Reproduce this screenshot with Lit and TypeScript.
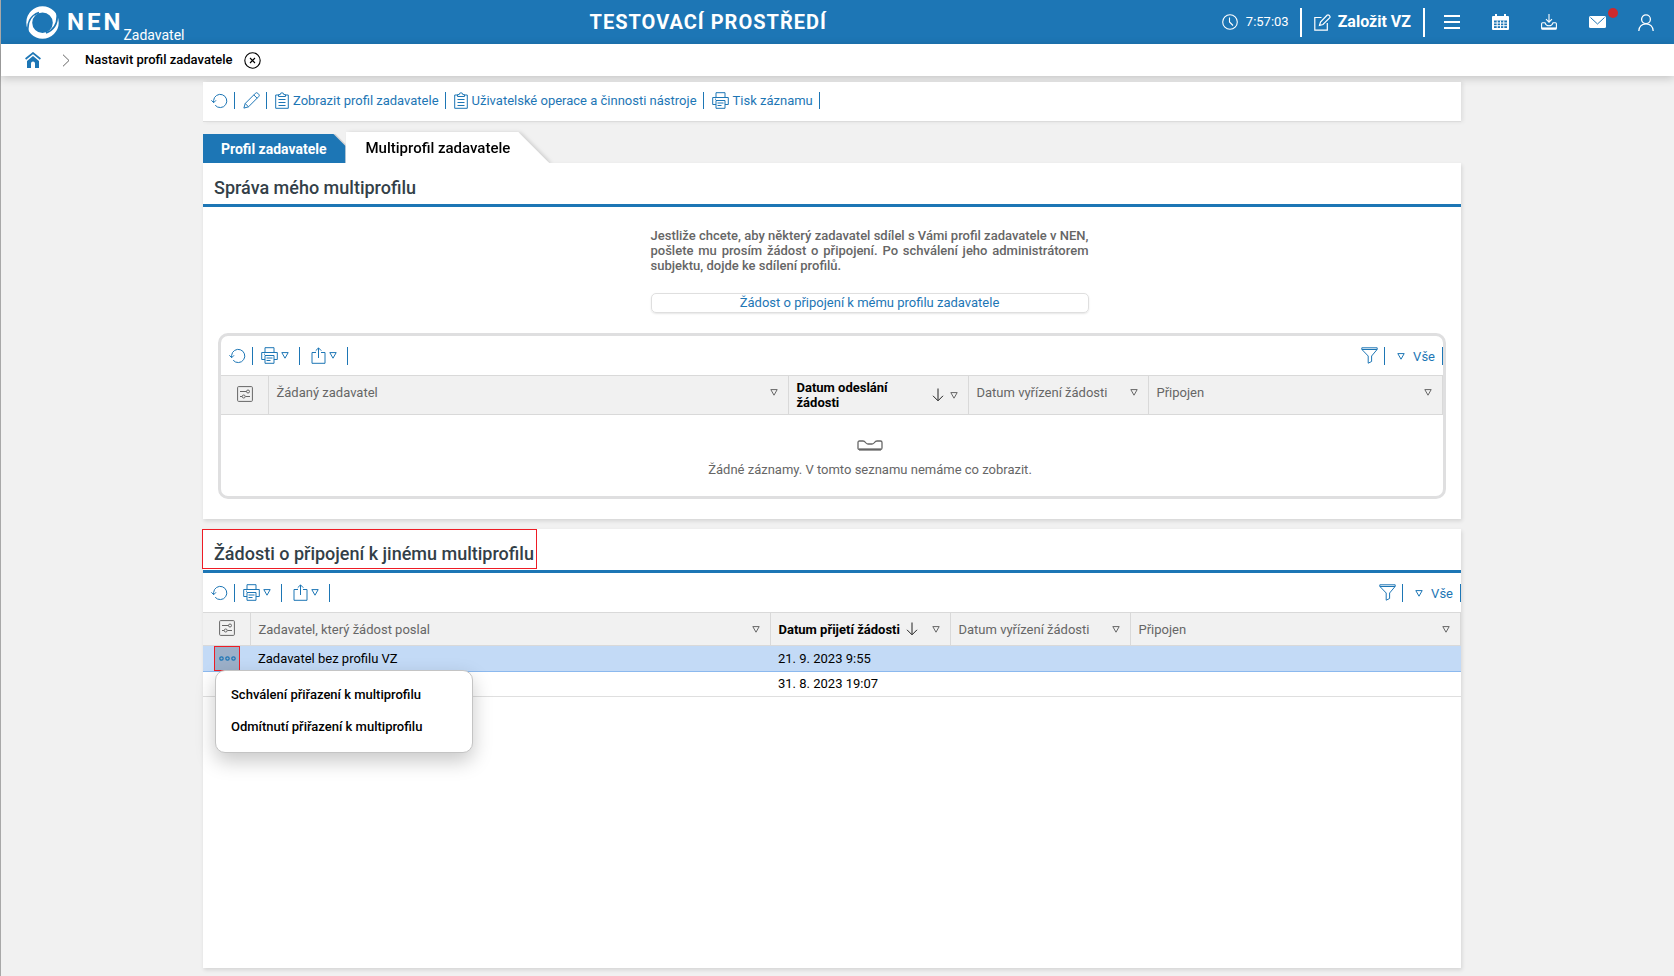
import { LitElement, html, css } from "lit";
import { customElement } from "lit/decorators.js";

const refresh = html`<svg width="17" height="16" viewBox="0 0 17 16" fill="none" stroke="currentColor"><path d="M2.6 9.6V7.5a6.6 6.6 0 1 1 1.6 4.8"/><path d="M.4 7.3l2.3 2.4 2.3-2.4"/></svg>`;
const pencil = html`<svg width="17" height="17" viewBox="0 0 17 17" fill="none" stroke="currentColor"><path d="M.9 16.1l1.3-4.6L12.4 1.3a1.7 1.7 0 0 1 2.4 0l.9.9a1.7 1.7 0 0 1 0 2.4L5.500 14.800z"/><path d="M10.800 2.900l3.300 3.300M2.200 11.500l3.300 3.300"/></svg>`;
const clipboard = html`<svg width="14" height="17" viewBox="0 0 14 17" fill="none" stroke="currentColor"><path d="M3.500 3H.7v13.300h12.600V3h-2.800M3.500 4.500V2.600h1.700a1.800 1.800 0 0 1 3.600 0h1.700v1.900z"/><path d="M3.500 7.500h7M3.500 10.500h7M3.500 13.500h7"/></svg>`;
const printer = html`<svg width="17" height="17" viewBox="0 0 17 17" fill="none" stroke="currentColor"><path d="M4 5V.7h9V5M4 12.500H.7V5.500h15.600v7H13"/><path d="M4 8.500h9v7.800H4zM5.500 11h6M5.500 13.500h4M3 7.200h1"/></svg>`;
const exportIcon = html`<svg width="15" height="17" viewBox="0 0 15 17" fill="none" stroke="currentColor"><path d="M5 5.500H1v10.800h13V5.500h-4M7.500 11V1M4.700 3.700l2.800-2.800 2.800 2.800"/></svg>`;
const triangle = html`<svg width="8" height="7" viewBox="0 0 8 7" fill="none" stroke="currentColor"><path d="M.8.6h6.400L4 6.200z"/></svg>`;
const funnel = html`<svg width="17" height="17" viewBox="0 0 17 17" fill="none" stroke="currentColor"><path d="M.8.8h15.400v1.600L10.600 9v5.500l-3.400 1.700V9L.8 2.400zM1 2.500h15"/></svg>`;
const settings = html`<svg width="16" height="16" viewBox="0 0 16 16" fill="none" stroke="currentColor"><rect x=".6" y=".6" width="14.800" height="14.800" rx="1"/><path d="M3 5.500h6.500M13 10.500H8.500M3 10.500h2"/><circle cx="11" cy="5.500" r="1.500"/><circle cx="6.700" cy="10.500" r="1.500"/></svg>`;
const sortDown = html`<svg width="12" height="14" viewBox="0 0 12 14" fill="none" stroke="#222"><path d="M6 .5v12M1 7.800l5 5 5-5"/></svg>`;
const tray = html`<svg width="26" height="11" viewBox="0 0 26 11" fill="none" stroke="currentColor" stroke-width="1.300"><path d="M1 8V2.500Q1 1 2.500 1H6q1.500 0 2.500 1.500T11 4h4q1.500 0 2.500-1.500T20 1h3.500Q25 1 25 2.500V8q0 1.500-1.500 1.500h-21Q1 9.500 1 8z"/><path d="M2 9.500h22" stroke-width="2"/></svg>`;
const dots = html`<svg width="17" height="5" viewBox="0 0 17 5" fill="none" stroke="currentColor" stroke-width="1.200"><circle cx="2.500" cy="2.500" r="1.700"/><circle cx="8.500" cy="2.500" r="1.700"/><circle cx="14.500" cy="2.500" r="1.700"/></svg>`;
const logo = html`<svg width="33" height="33" viewBox="0 0 33 33"><path fill="#fff" fill-rule="evenodd" d="M16.500.3a16.200 16.200 0 1 1 0 32.400 16.200 16.200 0 1 1 0-32.400zM16.500 6.500a10.300 10.300 0 1 0 0 20.600 10.300 10.300 0 1 0 0-20.600z"/><path fill="none" stroke="#1d76b5" stroke-width="1.700" d="M2 26C1 17.500 4 9.500 13 6.500M31 7c1 8.500-2 16.500-11 20"/></svg>`;
const home = html`<svg width="16" height="16" viewBox="0 0 16 16"><path fill="none" stroke="currentColor" stroke-width="1.700" d="M.6 7L8 1l7.400 6"/><path fill="currentColor" d="M8 4l6 5v7h-4v-4.500a2 2 0 0 0-4 0V16H2V9z"/></svg>`;
const chevron = html`<svg width="8" height="13" viewBox="0 0 8 13" fill="none" stroke="currentColor"><path d="M1 .7l6 5.800-6 5.800"/></svg>`;
const closeCircle = html`<svg width="17" height="17" viewBox="0 0 17 17" fill="none" stroke="currentColor" stroke-width="1.100"><circle cx="8.500" cy="8.500" r="7.700"/><path d="M6 6l5 5M11 6l-5 5"/></svg>`;
const clock = html`<svg width="16" height="16" viewBox="0 0 16 16" fill="none" stroke="currentColor" stroke-width="1.100"><circle cx="8" cy="8" r="7.300"/><path d="M7.500 3.500V8l3.500 3.500"/></svg>`;
const compose = html`<svg width="17" height="17" viewBox="0 0 17 17" fill="none" stroke="currentColor" stroke-width="1.200"><path d="M7.500 3.500H.8v12.700h12.500V9"/><path d="M5.500 11.500l1-3.500L13 1.300q1-.9 2 0l.6.600q.9 1 0 2L9 10.500z"/></svg>`;
const burger = html`<svg width="16" height="14" viewBox="0 0 16 14" fill="none" stroke="currentColor" stroke-width="2"><path d="M0 1h16M0 7h16M0 13h16"/></svg>`;
const calendar = html`<svg width="17" height="16" viewBox="0 0 17 16"><path fill="currentColor" fill-rule="evenodd" d="M1 2h2V0h2v2h7V0h2v2h2q1 0 1 1v12q0 1-1 1H1q-1 0-1-1V3q0-1 1-1zm1 4.500V14h13V6.500z"/><path stroke="currentColor" d="M2 9h13M2 11.700h13M5.200 6.500V14M8.500 6.500V14M11.800 6.500V14"/></svg>`;
const download = html`<svg width="16" height="16" viewBox="0 0 16 16" fill="none" stroke="currentColor" stroke-width="1.100"><path d="M8 0v8M5 5.200L8 8.200l3-3"/><path d="M4 8.800H1.500q-.9 0-.9 1v4.500q0 1 .9 1h13q.9 0 .9-1V9.800q0-1-.9-1H12q-1 3-4 3t-4-3z"/><path d="M1 14.300h14" stroke-width="1.800"/></svg>`;
const mail = html`<svg width="17" height="12" viewBox="0 0 17 12"><rect width="17" height="12" rx="1.500" fill="currentColor"/><path fill="none" stroke="#1d76b5" d="M1.500 1.500l7 6.500 7-6.500"/></svg>`;
const user = html`<svg width="16" height="17" viewBox="0 0 16 17" fill="none" stroke="currentColor" stroke-width="1.300"><circle cx="8" cy="5.200" r="4.400"/><path d="M.8 17C1 12.500 4 9.800 8 9.800s7 2.700 7.200 7.200"/></svg>`;

const base = css`
  * { box-sizing: border-box; }
  button { font: inherit; color: inherit; background: none; border: 0; padding: 0; cursor: pointer; }
  a { color: inherit; text-decoration: none; }
  svg { display: block; flex: none; }
`;

interface Column { label: string; sorted?: boolean; }

@customElement("request-grid")
export class RequestGrid extends LitElement {
  static properties = {
    columns: { attribute: false },
    rows: { attribute: false },
    menuRow: { type: Number },
  };
  declare columns: Column[];
  declare rows: string[][];
  declare menuRow: number;

  constructor() {
    super();
    this.columns = [];
    this.rows = [];
    this.menuRow = -1;
  }

  static styles = [base, css`
    :host { display: block; color: #666; }
    .bar { display: flex; align-items: center; height: 39px; padding-left: 8px; color: #1d76b5; }
    .tool { display: flex; align-items: center; gap: 3px; height: 18px; border-right: 1px solid; }
    .tool.plain { padding-right: 6px; }
    .tool.drop { padding: 0 10px 0 8px; }
    .tool.export { padding-left: 11px; }
    .right { margin-left: auto; display: flex; }
    .tool.view { gap: 8px; padding: 2px 7px 0 12px; }
    table { width: 100%; border-collapse: collapse; table-layout: fixed; }
    .c-tools { width: 47px; }
    .c-name { width: 520px; }
    .c-date { width: 180px; }
    th { background: #f1f1f1; border: 1px solid #d9d9d9; border-left: 0; padding: 0 8px; font-weight: 400; text-align: left; height: 33px; line-height: 15px; }
    th.tools { padding: 0 0 0 16px; }
    .th { display: flex; align-items: center; gap: 6px; padding-right: 2px; }
    .menu-toggle { margin-left: auto; color: #666; }
    .sorted { color: #000; font-weight: 700; }
    .tall th { height: 39px; }
    .tall .th { padding-bottom: 6px; }
    .tall .sorted .th { padding-bottom: 0; }
    td { height: 25px; padding: 0 8px; border-bottom: 1px solid #dfdfdf; color: #000; line-height: 16px; }
    td.tools { padding: 0 0 0 11px; position: relative; }
    .selected td { background: #c3daf6; border-bottom-color: #8cb9ee; }
    .more { display: grid; place-items: center; width: 26px; height: 25px; border: 1px solid #ee1c25; background: #9cb0c9; color: #1d76b5; }
    .menu { position: absolute; z-index: 2; left: 12px; top: 24px; width: 258px; padding: 8px 0 9px; background: #fff; border: 1px solid #c4c4c4; border-radius: 10px; box-shadow: 0 8px 20px rgba(0, 0, 0, .22); }
    .item { display: block; width: 100%; height: 32px; padding: 0 15px; text-align: left; font-weight: 500; }
    .empty { display: flex; flex-direction: column; align-items: center; gap: 10px; padding: 25px 0 17px 76px; line-height: 18px; }
  `];

  render() {
    const empty = !this.rows.length;
    return html`
      <div class="bar">
        <button class="tool plain" aria-label="Obnovit">${refresh}</button>
        <button class="tool drop" aria-label="Tisk">${printer}${triangle}</button>
        <button class="tool drop export" aria-label="Export">${exportIcon}${triangle}</button>
        <div class="right">
          <button class="tool plain" aria-label="Filtr">${funnel}</button>
          <button class="tool view">${triangle}Vše</button>
        </div>
      </div>
      <table class=${empty ? "tall" : ""}>
        <colgroup><col class="c-tools"><col class="c-name"><col class="c-date"><col class="c-date"><col></colgroup>
        <thead><tr>
          <th class="tools"><button aria-label="Nastavení sloupců">${settings}</button></th>
          ${this.columns.map((c) => html`<th class=${c.sorted ? "sorted" : ""}><div class="th"><span>${c.label}</span>${c.sorted ? sortDown : ""}<button class="menu-toggle" aria-label="Možnosti sloupce">${triangle}</button></div></th>`)}
        </tr></thead>
        <tbody>${this.rows.map((row, i) => html`
          <tr class=${i === this.menuRow ? "selected" : ""}>
            <td class="tools">${i === this.menuRow ? html`
              <button class="more" aria-label="Akce">${dots}</button>
              <div class="menu" role="menu">
                <button class="item" role="menuitem">Schválení přiřazení k multiprofilu</button>
                <button class="item" role="menuitem">Odmítnutí přiřazení k multiprofilu</button>
              </div>` : ""}</td>
            ${row.map((cell) => html`<td>${cell}</td>`)}
          </tr>`)}
        </tbody>
      </table>
      ${empty ? html`<div class="empty">${tray}<span>Žádné záznamy. V tomto seznamu nemáme co zobrazit.</span></div>` : ""}
    `;
  }
}

@customElement("app-root")
export class AppRoot extends LitElement {
  static styles = [base, css`
    :host { display: flex; flex-direction: column; min-height: 100vh; background: #f1f1f1; border-left: 1px solid #a8a8a8; font: 13px/16px Roboto, sans-serif; color: #000; box-sizing: border-box; }
    .header { display: flex; justify-content: space-between; align-items: center; height: 44px; padding: 0 20px 0 25px; background: #1d76b5; color: #fff; }
    .brand { display: flex; align-items: center; height: 44px; }
    .name { margin-left: 8px; font-size: 24px; font-weight: 700; letter-spacing: 3px; line-height: 44px; }
    .role { align-self: flex-end; font-size: 14px; line-height: 18px; }
    .env { padding-left: 10px; font-size: 20px; font-weight: 700; letter-spacing: 1px; line-height: 44px; }
    .actions { display: flex; align-items: center; justify-content: flex-end; }
    .clock { display: flex; align-items: center; gap: 8px; padding-right: 11px; }
    .create { display: flex; align-items: center; gap: 7px; height: 29px; padding: 0 12px; border: 2px solid #fff; border-width: 0 2px; font-size: 16px; font-weight: 700; }
    .quick { display: flex; align-items: center; gap: 32px; padding-left: 19px; }
    .mail { position: relative; }
    .badge { position: absolute; left: 19px; top: -8px; width: 10px; height: 10px; border-radius: 50%; background: #cc2a2e; }
    .crumbs { display: flex; align-items: center; height: 32px; padding-left: 24px; background: #fff; box-shadow: 0 2px 10px rgba(0, 0, 0, .2); font-weight: 500; }
    .home { color: #1d76b5; }
    .chevron { margin: 0 15px 0 21px; color: #666; }
    .close { margin-left: 12px; }
    .content { display: flex; flex-direction: column; flex: 1; width: 100%; padding: 6px 11px 8px 0; }
    .column { display: flex; flex-direction: column; flex: 1; width: 100%; max-width: 1258px; margin: 0 auto; }
    .toolbar { display: flex; align-items: center; height: 40px; padding: 0 0 2px 8px; background: #fff; border-bottom: 1px solid #dcdcdc; box-shadow: 2px 0 4px rgba(0, 0, 0, .08); color: #1d76b5; }
    .tool { display: flex; align-items: center; gap: 4px; height: 17px; padding: 0 6px 0 8px; border-right: 1px solid; }
    .tool.reload { padding-left: 0; }
    .tabs { display: flex; align-items: flex-end; height: 31px; margin-top: 10px; }
    .tab { height: 29px; padding: 1px 19px 0 18px; background: #1d76b5; color: #fff; font-size: 14px; font-weight: 700; clip-path: polygon(0 0, calc(100% - 12px) 0, 100% 12px, 100% 100%, 0 100%); }
    .passive-wrap { background: linear-gradient(#d4d4d4, #d4d4d4) no-repeat right bottom / 12px 29px; clip-path: polygon(0 0, calc(100% - 10px) 0, 100% 10px, 100% 100%, 0 100%); }
    .active-wrap { filter: drop-shadow(2px 1px 2px rgba(0, 0, 0, .2)); clip-path: inset(-4px -10px 0 0); }
    .tab.active { height: 31px; padding: 0 39px 0 20px; background: #fff; color: #000; font-size: 15px; font-weight: 500; clip-path: polygon(0 0, calc(100% - 31px) 0, 100% 100%, 0 100%); }
    .card { background: #fff; box-shadow: 1px 2px 4px rgba(0, 0, 0, .12); }
    .card.first { padding-bottom: 20px; }
    .card.second { flex: 1; margin-top: 10px; }
    .heading { display: flex; height: 44px; border-bottom: 3px solid #1d76b5; }
    .title { margin: 0; padding: 4px 0 0 11px; font-size: 18px; font-weight: 500; line-height: 41px; color: #333f48; }
    .title.marked { height: 40px; margin-left: -1px; padding-top: 3px; padding-right: 2px; border: 1px solid #ee1c25; }
    .intro-row { padding-left: 75px; }
    .intro { display: flex; flex-direction: column; gap: 20px; width: 438px; margin: 21px auto 20px; }
    .text { margin: 0; font-weight: 500; line-height: 15px; color: #666; text-align: justify; }
    .request { height: 20px; border: 1px solid #dfdfdf; border-radius: 5px; box-shadow: 0 1px 2px rgba(0, 0, 0, .1); color: #1d76b5; line-height: 18px; }
    .frame { margin: 0 15px; border: 3px solid #dfdfe0; border-radius: 10px; overflow: hidden; }
  `];

  render() {
    return html`
      <header class="header">
        <div class="brand">${logo}<span class="name">NEN</span><span class="role">Zadavatel</span></div>
        <div class="env">TESTOVACÍ PROSTŘEDÍ</div>
        <div class="actions">
          <span class="clock">${clock}7:57:03</span>
          <button class="create">${compose}Založit VZ</button>
          <div class="quick">
            <button aria-label="Menu">${burger}</button>
            <button aria-label="Kalendář">${calendar}</button>
            <button aria-label="Stahování">${download}</button>
            <button class="mail" aria-label="Zprávy">${mail}<span class="badge"></span></button>
            <button aria-label="Uživatel">${user}</button>
          </div>
        </div>
      </header>
      <nav class="crumbs">
        <a class="home" href="#" aria-label="Domů">${home}</a>
        <span class="chevron">${chevron}</span>
        <span>Nastavit profil zadavatele</span>
        <button class="close" aria-label="Zavřít">${closeCircle}</button>
      </nav>
      <main class="content"><div class="column">
        <div class="toolbar">
          <button class="tool reload" aria-label="Obnovit">${refresh}</button>
          <button class="tool" aria-label="Upravit">${pencil}</button>
          <button class="tool">${clipboard}Zobrazit profil zadavatele</button>
          <button class="tool">${clipboard}Uživatelské operace a činnosti nástroje</button>
          <button class="tool">${printer}Tisk záznamu</button>
        </div>
        <div class="tabs" role="tablist">
          <div class="passive-wrap"><button class="tab" role="tab">Profil zadavatele</button></div>
          <div class="active-wrap"><button class="tab active" role="tab" aria-selected="true">Multiprofil zadavatele</button></div>
        </div>
        <section class="card first">
          <div class="heading"><h2 class="title">Správa mého multiprofilu</h2></div>
          <div class="intro-row"><div class="intro">
            <p class="text">Jestliže chcete, aby některý zadavatel sdílel s Vámi profil zadavatele v NEN, pošlete mu prosím žádost o připojení. Po schválení jeho administrátorem subjektu, dojde ke sdílení profilů.</p>
            <button class="request">Žádost o připojení k mému profilu zadavatele</button>
          </div></div>
          <div class="frame">
            <request-grid .columns=${[{ label: "Žádaný zadavatel" }, { label: "Datum odeslání žádosti", sorted: true }, { label: "Datum vyřízení žádosti" }, { label: "Připojen" }]}></request-grid>
          </div>
        </section>
        <section class="card second">
          <div class="heading"><h2 class="title marked">Žádosti o připojení k jinému multiprofilu</h2></div>
          <request-grid menuRow="0"
            .columns=${[{ label: "Zadavatel, který žádost poslal" }, { label: "Datum přijetí žádosti", sorted: true }, { label: "Datum vyřízení žádosti" }, { label: "Připojen" }]}
            .rows=${[["Zadavatel bez profilu VZ", "21. 9. 2023 9:55", "", ""], ["", "31. 8. 2023 19:07", "", ""]]}></request-grid>
        </section>
      </div></main>
    `;
  }
}
